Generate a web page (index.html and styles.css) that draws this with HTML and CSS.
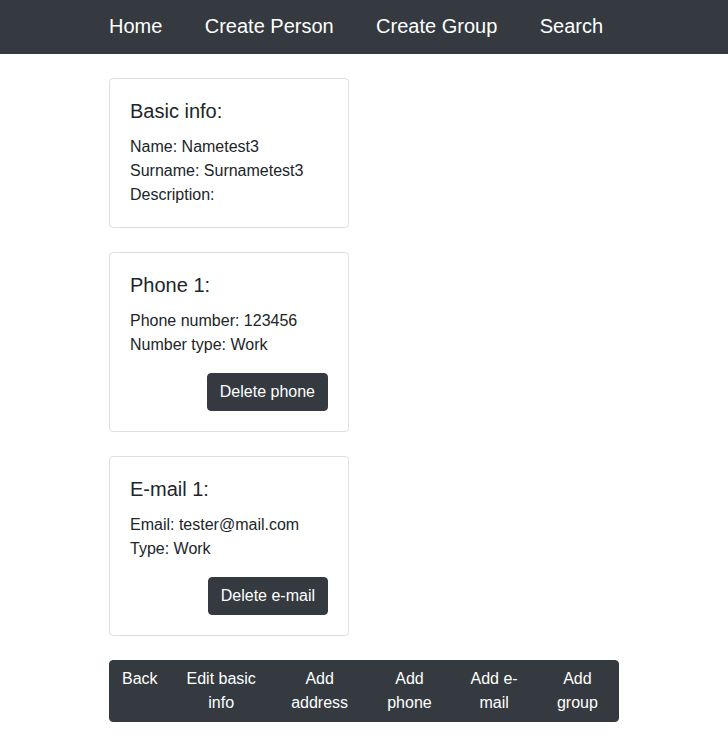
FILE: index.html
```html
<!DOCTYPE html>
<html lang="en">
<head>
<meta charset="utf-8">
<title>Person</title>
<link rel="stylesheet" href="styles.css">
</head>
<body>
<nav class="navbar">
  <div class="container nav-inner">
    <a class="nav-link" href="#">Home</a>
    <a class="nav-link" href="#">Create Person</a>
    <a class="nav-link" href="#">Create Group</a>
    <a class="nav-link" href="#">Search</a>
  </div>
</nav>
<main class="container main">
  <section class="card">
    <h5 class="card-title">Basic info:</h5>
    <p class="card-text">Name: Nametest3</p>
    <p class="card-text">Surname: Surnametest3</p>
    <p class="card-text">Description:</p>
  </section>
  <section class="card">
    <h5 class="card-title">Phone 1:</h5>
    <p class="card-text">Phone number: 123456</p>
    <p class="card-text">Number type: Work</p>
    <div class="card-actions"><button class="btn">Delete phone</button></div>
  </section>
  <section class="card">
    <h5 class="card-title">E-mail 1:</h5>
    <p class="card-text">Email: tester@mail.com</p>
    <p class="card-text">Type: Work</p>
    <div class="card-actions"><button class="btn">Delete e-mail</button></div>
  </section>
  <div class="btn-group">
    <a class="btn" href="#">Back</a>
    <a class="btn" href="#">Edit basic info</a>
    <a class="btn" href="#">Add address</a>
    <a class="btn" href="#">Add phone</a>
    <a class="btn" href="#">Add e-mail</a>
    <a class="btn" href="#">Add group</a>
  </div>
</main>
</body>
</html>
```
FILE: styles.css
```css
* { box-sizing: border-box; }
html, body { margin: 0; padding: 0; }
body {
  font-family: "Liberation Sans", Arial, sans-serif;
  font-size: 16px;
  line-height: 1.5;
  color: #212529;
  background: #fff;
}
.container {
  width: 540px;
  margin: 0 auto;
  padding: 0 15px;
}
.navbar {
  background: #343a40;
  height: 54px;
}
.nav-inner {
  height: 54px;
  padding-bottom: 2px;
  display: flex;
  align-items: center;
  column-gap: 42.4px;
}
.nav-link {
  color: #fff;
  text-decoration: none;
  font-size: 20px;
  line-height: 30px;
}
.main {
  padding-top: 24px;
  padding-bottom: 24px;
  display: flex;
  flex-direction: column;
  align-items: flex-start;
  gap: 24px;
}
.card {
  width: 240px;
  border: 1px solid rgba(0,0,0,.125);
  border-radius: 4px;
  padding: 20px;
}
.card-title {
  margin: 0 0 12px;
  font-size: 20px;
  font-weight: 400;
  line-height: 24px;
}
.card-text { margin: 0; }
.card-actions {
  margin-top: 16px;
  display: flex;
  justify-content: flex-end;
}
.btn {
  display: inline-block;
  font-family: inherit;
  font-size: 16px;
  line-height: 24px;
  padding: 6px 12px;
  color: #fff;
  text-decoration: none;
  background: #343a40;
  border: 1px solid #343a40;
  border-radius: 4px;
  text-align: center;
  cursor: pointer;
}
.btn-group {
  display: inline-flex;
  max-width: 510px;
}
.btn-group .btn {
  flex: 1 1 auto;
  border-radius: 0;
}
.btn-group .btn + .btn { margin-left: -1px; }
.btn-group .btn:first-child { border-radius: 4px 0 0 4px; }
.btn-group .btn:last-child { border-radius: 0 4px 4px 0; }
```
